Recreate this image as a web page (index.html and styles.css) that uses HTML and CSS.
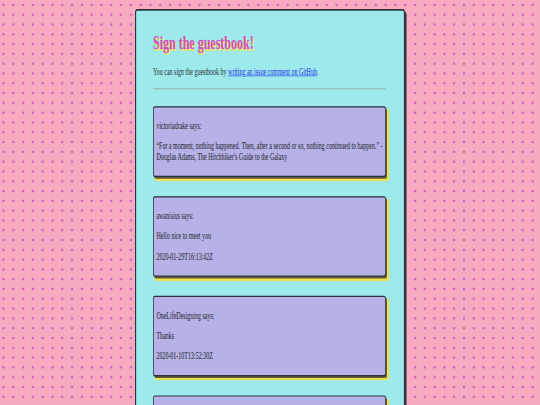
FILE: index.html
```html
<!DOCTYPE html>
<html lang="en">
<head>
<meta charset="utf-8">
<title>Guestbook</title>
<link rel="stylesheet" href="styles.css">
</head>
<body>
<div class="page">
  <main class="book">
    <h1 class="title">Sign the guestbook!</h1>
    <p class="intro">You can sign the guestbook by <a href="#">writing an issue comment on GitHub</a>.</p>
    <hr class="rule">
    <div class="entries">
      <article class="entry">
        <p>victoriadrake says:</p>
        <p>“For a moment, nothing happened. Then, after a second or so, nothing continued to happen.” - Douglas Adams, The Hitchhiker's Guide to the Galaxy</p>
      </article>
      <article class="entry">
        <p>awanisius says:</p>
        <p>Hello nice to meet you</p>
        <p>2020-01-29T16:13:42Z</p>
      </article>
      <article class="entry">
        <p>OneLifeDesigning says:</p>
        <p>Thanks</p>
        <p>2020-01-10T13:52:30Z</p>
      </article>
      <article class="entry entry-more"></article>
    </div>
  </main>
</div>
</body>
</html>
```
FILE: styles.css
```css
html {
  margin: 0;
  overflow: hidden;
  background-color: #f6abc0;
  background-image: radial-gradient(circle, #d45cc2 1.1px, rgba(212, 92, 194, 0) 1.6px);
  background-size: 9.8px 9.8px;
  background-position: -1.4px 0px;
}

body {
  margin: 0;
  overflow: hidden;
  font-family: "Liberation Serif", "Times New Roman", serif;
  font-size: 16px;
  color: #1e1e28;
}

.page {
  width: 1440px;
  height: 900px;
  padding-top: 15px;
  transform: scale(0.375, 0.6);
  transform-origin: 0 0;
}

.book {
  box-sizing: border-box;
  width: 720px;
  margin: 0 auto;
  padding: 14px 48px 40px 45px;
  background: #9de9eb;
  border: 3px solid #2e3340;
  border-radius: 6px;
  box-shadow: 4px 4px 0 #2e3340;
}

.title {
  margin: 21px 0;
  font-size: 32px;
  font-weight: bold;
  color: #d84bb8;
  text-shadow: 2px 3px 0 #f1e25a;
}

.intro {
  margin: 21px 0 0;
  color: #2a2f3a;
}

.intro a {
  color: #1a2cee;
}

.rule {
  margin: 18px 0 28px;
  border: 0;
  border-top: 2px solid #9cb8bb;
}

.entries {
  display: flex;
  flex-direction: column;
  gap: 32px;
}

.entry {
  background: #b6b1e7;
  border: 2px solid #2a2f3c;
  border-radius: 5px;
  padding: 6px 6px 6px 7px;
  box-shadow: 3px 3px 0 #5a5a3a, 6px 6px 3px #f3df48;
}

.entry-more {
  min-height: 120px;
}

.entry p {
  margin: 16px 0;
}
```
